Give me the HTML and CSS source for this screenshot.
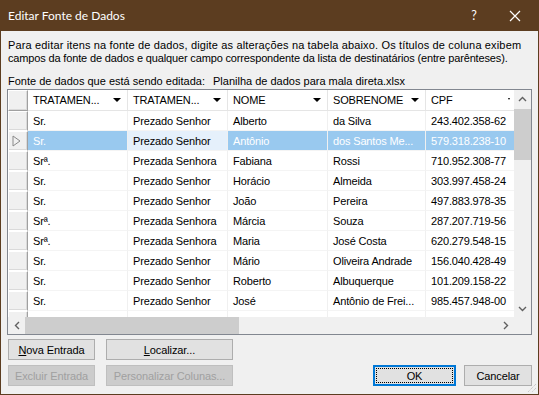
FILE: index.html
```html
<!doctype html>
<html lang="pt">
<head>
	<meta charset="UTF-8">
	<title>Editar Fonte de Dados</title>
	<link rel="stylesheet" href="styles.css">
</head>
<body>
	<div class="window">
		<div class="titlebar">
			<span class="title">Editar Fonte de Dados</span>
			<span class="help">?</span>
			<span class="close">
				<svg width="12" height="12" viewBox="0 0 12 12"><path d="M1 1L11 11M11 1L1 11" stroke="#fff" stroke-width="1.2"/></svg>
			</span>
		</div>
		<div class="content">
			<p class="intro">
				<span class="line1">Para editar itens na fonte de dados, digite as alterações na tabela abaixo. Os títulos de coluna exibem</span>
				<span class="line2">campos da fonte de dados e qualquer campo correspondente da lista de destinatários (entre parênteses).</span>
			</p>
			<div class="source">
				<span class="source_label">Fonte de dados que está sendo editada:</span>
				<span>Planilha de dados para mala direta.xlsx</span>
			</div>
			<div class="grid">
				<div class="viewport">
					<div class="row head">
						<div class="rh"></div>
						<div class="hc">TRATAMEN...<i class="drop"></i></div>
						<div class="hc">TRATAMEN...<i class="drop"></i></div>
						<div class="hc">NOME<i class="drop"></i></div>
						<div class="hc">SOBRENOME<i class="drop"></i></div>
						<div class="hc">CPF<i class="drop small"></i></div>
					</div>
					<div class="row"><div class="rh"></div><div class="c">Sr.</div><div class="c">Prezado Senhor</div><div class="c">Alberto</div><div class="c">da Silva</div><div class="c">243.402.358-62</div></div>
					<div class="row sel"><div class="rh"><svg width="9" height="12" viewBox="0 0 9 12"><path d="M1 1L8 6L1 11Z" fill="none" stroke="#8a8a8a"/></svg></div><div class="c">Sr.</div><div class="c cur">Prezado Senhor</div><div class="c">Antônio</div><div class="c">dos Santos Me...</div><div class="c">579.318.238-10</div></div>
					<div class="row"><div class="rh"></div><div class="c">Srª.</div><div class="c">Prezada Senhora</div><div class="c">Fabiana</div><div class="c">Rossi</div><div class="c">710.952.308-77</div></div>
					<div class="row"><div class="rh"></div><div class="c">Sr.</div><div class="c">Prezado Senhor</div><div class="c">Horácio</div><div class="c">Almeida</div><div class="c">303.997.458-24</div></div>
					<div class="row"><div class="rh"></div><div class="c">Sr.</div><div class="c">Prezado Senhor</div><div class="c">João</div><div class="c">Pereira</div><div class="c">497.883.978-35</div></div>
					<div class="row"><div class="rh"></div><div class="c">Srª.</div><div class="c">Prezada Senhora</div><div class="c">Márcia</div><div class="c">Souza</div><div class="c">287.207.719-56</div></div>
					<div class="row"><div class="rh"></div><div class="c">Srª.</div><div class="c">Prezada Senhora</div><div class="c">Maria</div><div class="c">José Costa</div><div class="c">620.279.548-15</div></div>
					<div class="row"><div class="rh"></div><div class="c">Sr.</div><div class="c">Prezado Senhor</div><div class="c">Mário</div><div class="c">Oliveira Andrade</div><div class="c">156.040.428-49</div></div>
					<div class="row"><div class="rh"></div><div class="c">Sr.</div><div class="c">Prezado Senhor</div><div class="c">Roberto</div><div class="c">Albuquerque</div><div class="c">101.209.158-22</div></div>
					<div class="row"><div class="rh"></div><div class="c">Sr.</div><div class="c">Prezado Senhor</div><div class="c">José</div><div class="c">Antônio de Frei...</div><div class="c">985.457.948-00</div></div>
					<div class="row"><div class="rh"></div><div class="c">Sr.</div><div class="c">Prezado Senhor</div><div class="c">Valter</div><div class="c">Guimarães Ferreira</div><div class="c">000.000.348-44</div></div>
				</div>
				<div class="vscroll">
					<span class="arrow"><svg width="9" height="6" viewBox="0 0 9 6"><path d="M1 5L4.5 1.5L8 5" fill="none" stroke="#606060" stroke-width="1.4"/></svg></span>
					<span class="vthumb"></span>
					<span class="arrow"><svg width="9" height="6" viewBox="0 0 9 6"><path d="M1 1L4.5 4.5L8 1" fill="none" stroke="#606060" stroke-width="1.4"/></svg></span>
				</div>
				<div class="hscroll">
					<span class="arrow"><svg width="6" height="9" viewBox="0 0 6 9"><path d="M5 1L1.5 4.5L5 8" fill="none" stroke="#606060" stroke-width="1.4"/></svg></span>
					<span class="hthumb"></span>
					<span class="arrow"><svg width="6" height="9" viewBox="0 0 6 9"><path d="M1 1L4.5 4.5L1 8" fill="none" stroke="#606060" stroke-width="1.4"/></svg></span>
				</div>
				<div class="corner"></div>
			</div>
			<div class="buttons">
				<div class="btn_col">
					<button class="btn"><u>N</u>ova Entrada</button>
					<button class="btn" disabled><u>E</u>xcluir Entrada</button>
				</div>
				<div class="btn_col wide">
					<button class="btn"><u>L</u>ocalizar...</button>
					<button class="btn" disabled><u>P</u>ersonalizar Colunas...</button>
				</div>
				<div class="btn_end">
					<button class="btn ok"><span>OK</span></button>
					<button class="btn cancel">Cancelar</button>
				</div>
			</div>
		</div>
		<svg class="grip" width="12" height="12" viewBox="0 0 12 12"><path d="M11 3L3 11M11 7L7 11" stroke="#b8b8b8" stroke-dasharray="1 1"/></svg>
	</div>
</body>
</html>
```

FILE: styles.css
```css
*,*::before,*::after{box-sizing:border-box;}
html,body{margin:0;padding:0;}
body{
	font-family:"Liberation Sans",Arial,sans-serif;
	font-size:11px;
	color:#000;
	background:#f0f0f0;
}
p{margin:0;}

.window{
	width:539px;
	height:395px;
	border:1px solid #5c3d20;
	border-top:0;
	background:#f0f0f0;
	display:flex;
	flex-direction:column;
	position:relative;
	overflow:hidden;
}
.titlebar{
	height:31px;
	flex:none;
	background:#5c3d20;
	color:#fff;
	display:flex;
	align-items:center;
	padding-left:7px;
	font-family:Lato,"Liberation Sans",sans-serif;
	font-size:12px;
}
.title{flex:1;}
.help{
	width:36px;
	text-align:center;
	font-size:12.5px;
}
.close{
	width:46px;
	display:flex;
	justify-content:center;
}

.content{
	flex:1;
	padding:8px 6px 0 6px;
	display:flex;
	flex-direction:column;
}
.intro{
	line-height:13px;
	padding-left:1px;
	white-space:nowrap;
}
.intro span{display:block;}
.intro .line1{letter-spacing:0.15px;}
.intro .line2{letter-spacing:-0.15px;}
.source{
	margin-top:10px;
	padding-left:1px;
	line-height:13px;
	white-space:nowrap;
	display:flex;
}
.source_label{width:205px;}

.grid{
	margin-top:1px;
	height:246px;
	flex:none;
	border:1px solid #828790;
	background:#fff;
	display:grid;
	grid-template-columns:1fr 17px;
	grid-template-rows:1fr 17px;
}
.viewport{
	overflow:hidden;
	letter-spacing:-0.15px;
}
.row{
	display:flex;
	height:20px;
	white-space:nowrap;
}
.row.head{height:21px;}
.row>div{
	flex:none;
	overflow:hidden;
}
.rh{
	width:20px;
	background:#f0f0f0;
	border-right:1px solid #a0a0a0;
	border-bottom:1px solid #fff;
	border-left:1px solid #fff;
	border-top:1px solid #fff;
	box-shadow:inset -1px -1px #dadada;
	display:flex;
	align-items:center;
	padding-left:3px;
}
.c{
	width:100px;
	padding-left:5px;
	line-height:20px;
	border-right:1px solid #f0f0f0;
	border-bottom:1px solid #f4f4f4;
}
.row>.c:nth-child(5){width:98px;}
.row>.c:nth-child(6){width:100px;}
.head .hc{
	width:100px;
	padding-left:5px;
	line-height:20px;
	border-right:1px solid #e5e5e5;
	border-bottom:1px solid #e5e5e5;
	background:#fff;
	position:relative;
}
.head .hc:nth-child(5){width:98px;}
.head .rh{border-bottom:1px solid #a0a0a0;}
.drop{
	position:absolute;
	right:6px;
	top:8px;
	border-left:4px solid transparent;
	border-right:4px solid transparent;
	border-top:4px solid #000;
}
.drop.small{right:15px;border-width:2px 1px 0;}
.sel .c{
	background:#99c9ef;
	color:#fff;
}
.sel .c.cur{
	background:#e5f0fb;
	color:#000;
}

.vscroll{
	background:#f0f0f0;
	display:flex;
	flex-direction:column;
	align-items:center;
}
.vscroll .arrow{
	height:17px;
	width:17px;
	display:flex;
	align-items:center;
	justify-content:center;
	flex:none;
}
.vthumb{
	margin-top:2px;
	width:17px;
	height:51px;
	background:#cdcdcd;
	flex:none;
}
.vscroll .arrow:last-child{margin-top:auto;}
.hscroll{
	background:#f0f0f0;
	display:flex;
	align-items:center;
}
.hscroll .arrow{
	width:17px;
	height:17px;
	display:flex;
	align-items:center;
	justify-content:center;
	flex:none;
}
.hthumb{
	width:214px;
	height:17px;
	background:#cdcdcd;
	flex:none;
}
.hscroll .arrow:last-child{margin-left:auto;}
.corner{background:#f0f0f0;}

.buttons{
	display:flex;
	margin-top:4px;
	padding-left:1px;
}
.btn_col{
	display:flex;
	flex-direction:column;
	gap:5px;
	width:87px;
}
.btn_col.wide{
	width:127px;
	margin-left:11px;
}
.btn_end{
	margin-left:auto;
	align-self:flex-end;
	display:flex;
	gap:8px;
}
.btn{
	height:21px;
	padding:0;
	font-family:inherit;
	font-size:11px;
	letter-spacing:-0.1px;
	color:#000;
	background:#e1e1e1;
	border:1px solid #adadad;
}
.btn:disabled{
	background:#cccccc;
	border-color:#bfbfbf;
	color:#a0a0a0;
}
.btn:disabled u{text-decoration:none;}
.btn.ok{
	width:83px;
	border:2px solid #0078d7;
	padding:1px;
}
.btn.ok span{
	display:flex;
	height:100%;
	align-items:center;
	justify-content:center;
	border:1px dotted #000;
}
.btn.cancel{width:68px;}

.grip{
	position:absolute;
	right:1px;
	bottom:1px;
}
```
